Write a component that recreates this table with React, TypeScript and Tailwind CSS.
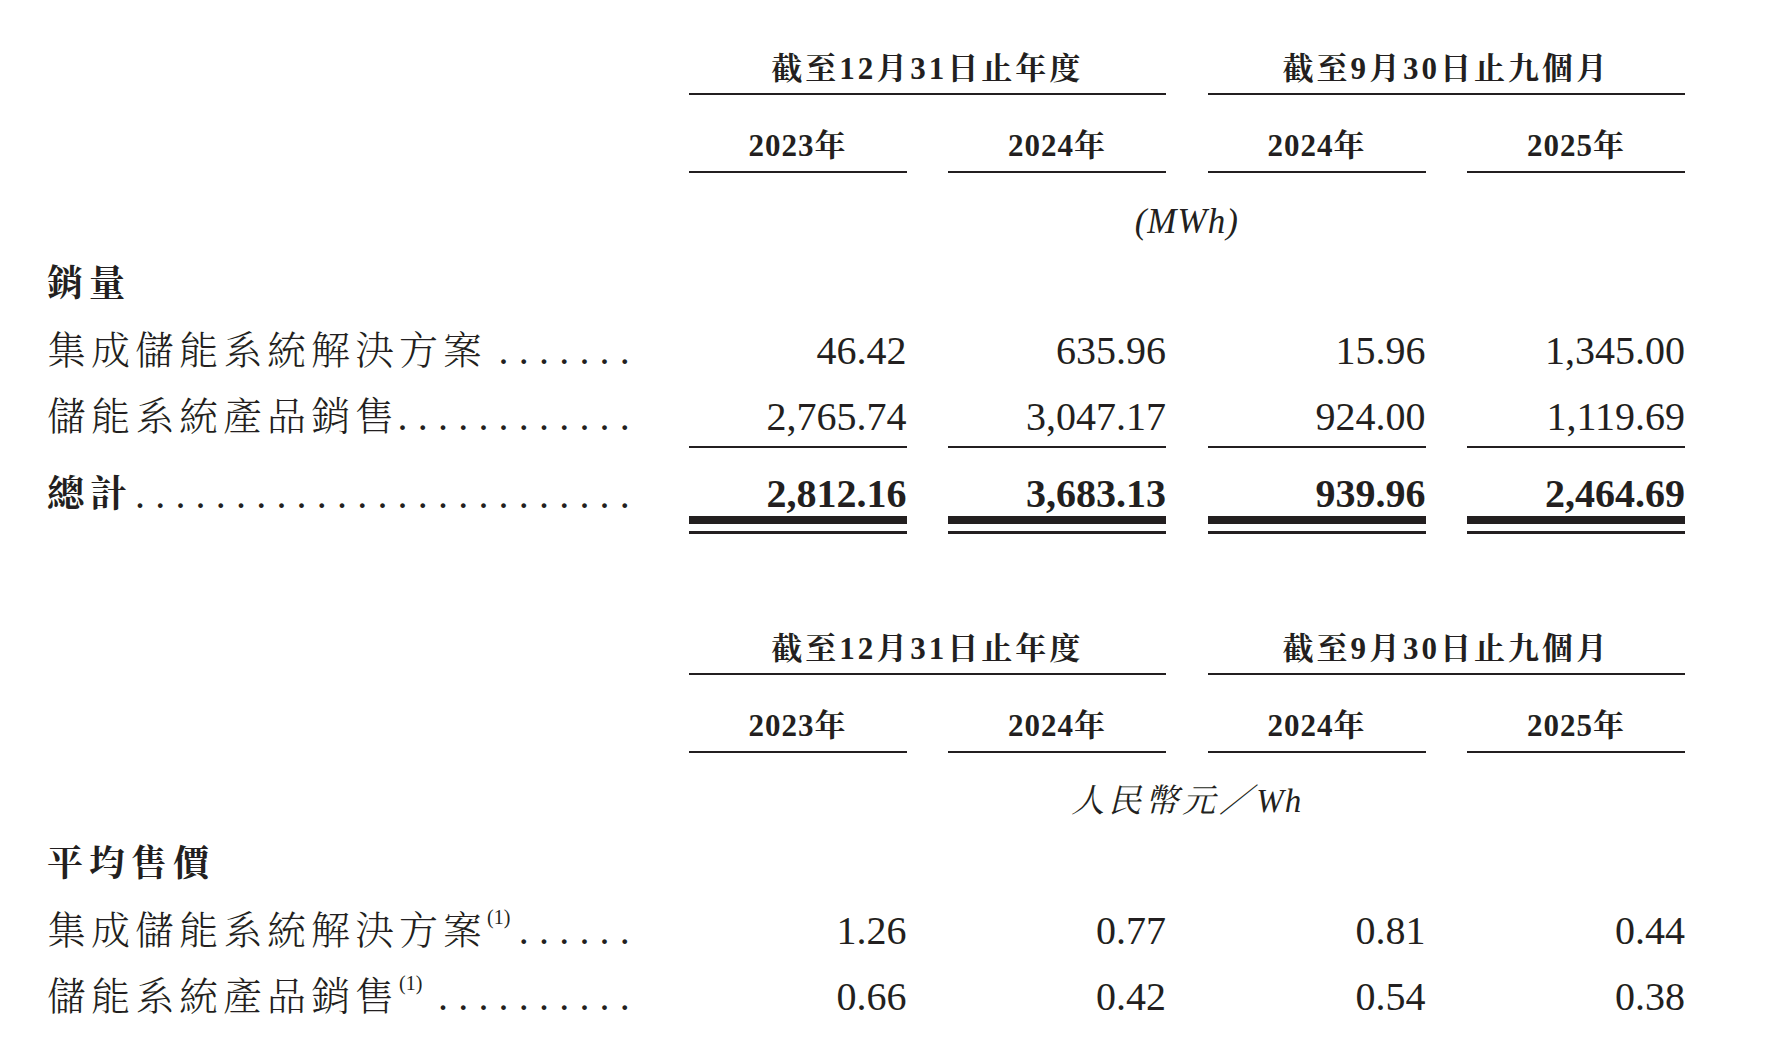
import type { ReactNode } from 'react';

const grid = 'grid grid-cols-[600px_218px_218px_218px_218px] gap-x-[41.5px]';
const ink = 'border-[#231f20]';

function Dots({ n }: { n: number }) {
    return <span className="shrink-0 whitespace-nowrap text-[40px] tracking-[10.2px]">{'.'.repeat(n)}</span>;
}

function Label({ text, note, dots, bold }: { text: string; note?: boolean; dots: number; bold?: boolean }) {
    return (
        <div className="flex h-[50px] items-center justify-between self-start pr-[7px]">
            <span
                className={`min-w-0 whitespace-nowrap ${
                    bold ? 'text-[37px] font-bold tracking-[6px]' : 'text-[39px] font-light tracking-[5px]'
                }`}
            >
                {text}
                {note && <sup className="-top-5 text-[20px] tracking-normal">(1)</sup>}
            </span>
            <Dots n={dots} />
        </div>
    );
}

function Headers() {
    return (
        <>
            <div className={grid}>
                <div />
                <div className={`col-span-2 flex h-[53px] items-center justify-center border-b-2 ${ink} pt-[4px] text-[31px] font-bold tracking-[3px]`}>
                    截至12月31日止年度
                </div>
                <div className={`col-span-2 flex h-[53px] items-center justify-center border-b-2 ${ink} pt-[4px] text-[31px] font-bold tracking-[3px]`}>
                    截至9月30日止九個月
                </div>
            </div>
            <div className={grid}>
                <div />
                {['2023年', '2024年', '2024年', '2025年'].map((y, i) => (
                    <div key={i} className={`flex h-[78px] items-center justify-center border-b-2 ${ink} pt-[26px] text-[31px] font-bold tracking-[1px]`}>
                        {y}
                    </div>
                ))}
            </div>
        </>
    );
}

function Unit({ children }: { children: ReactNode }) {
    return (
        <div className={`${grid} mt-[24px]`}>
            <div />
            <div className="col-span-4 flex h-[50px] items-center justify-center italic">{children}</div>
        </div>
    );
}

function Section({ title }: { title: string }) {
    return (
        <div className={`${grid} mt-[11px]`}>
            <div className="flex h-[50px] items-center pt-[2px] text-[36px] font-bold tracking-[6px]">{title}</div>
        </div>
    );
}

function Row({ label, values, className, cell }: { label: ReactNode; values: string[]; className: string; cell: string }) {
    return (
        <div className={`${grid} ${className}`}>
            {label}
            {values.map((v, i) => (
                <div key={i} className={`flex items-center justify-end text-[40px] ${cell}`}>
                    {v}
                </div>
            ))}
        </div>
    );
}

export default function App() {
    return (
        <div className="h-[1057px] w-[1774px] overflow-hidden bg-white pl-[47px] pt-[42px] font-['Liberation_Serif','Noto_Serif_CJK_TC','Noto_Sans_CJK_TC',serif] text-[#231f20]">
            {/* sales volume */}
            <Headers />
            <Unit>
                <span className="text-[35px] tracking-[1px]">(MWh)</span>
            </Unit>
            <Section title="銷量" />
            <Row
                className="mt-[18px]"
                cell="h-[50px]"
                label={<Label text="集成儲能系統解決方案" dots={7} />}
                values={['46.42', '635.96', '15.96', '1,345.00']}
            />
            <Row
                className="mt-[16px]"
                cell={`h-[56px] pb-[4px] border-b-2 ${ink}`}
                label={<Label text="儲能系統產品銷售" dots={12} />}
                values={['2,765.74', '3,047.17', '924.00', '1,119.69']}
            />
            <Row
                className=""
                cell={`h-[76px] pt-[24px] border-b-[8px] ${ink} font-bold`}
                label={
                    <div className="mt-[22px]">
                        <Label text="總計" dots={25} bold />
                    </div>
                }
                values={['2,812.16', '3,683.13', '939.96', '2,464.69']}
            />
            <div className={`${grid} mt-[7px]`}>
                <div />
                <div className="h-[3px] bg-[#231f20]" />
                <div className="h-[3px] bg-[#231f20]" />
                <div className="h-[3px] bg-[#231f20]" />
                <div className="h-[3px] bg-[#231f20]" />
            </div>

            {/* average selling price */}
            <div className="mt-[88px]">
                <Headers />
                <Unit>
                    <span className="text-[33px] tracking-[4px]">
                        人民幣元／<span className="tracking-[1px]">Wh</span>
                    </span>
                </Unit>
                <Section title="平均售價" />
                <Row
                    className="mt-[18px]"
                    cell="h-[50px]"
                    label={<Label text="集成儲能系統解決方案" note dots={6} />}
                    values={['1.26', '0.77', '0.81', '0.44']}
                />
                <Row
                    className="mt-[16px]"
                    cell="h-[50px]"
                    label={<Label text="儲能系統產品銷售" note dots={10} />}
                    values={['0.66', '0.42', '0.54', '0.38']}
                />
            </div>
        </div>
    );
}
